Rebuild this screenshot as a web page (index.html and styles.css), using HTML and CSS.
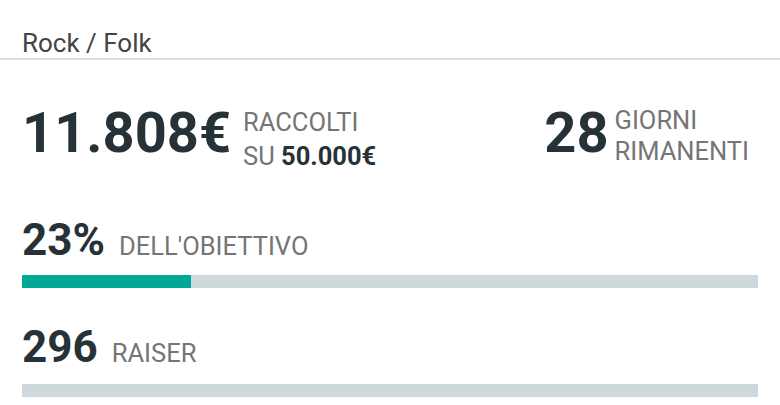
FILE: index.html
```html
<!DOCTYPE html>
<html>
<head>
<meta charset="utf-8">
<link rel="stylesheet" href="styles.css">
</head>
<body>
<div class="page">
  <div class="category">Rock / Folk</div>
  <div class="stats">
    <div class="stat">
      <span class="big">11.808€</span>
      <span class="label">RACCOLTI<br>SU <b>50.000€</b></span>
    </div>
    <div class="stat days">
      <span class="big">28</span>
      <span class="label">GIORNI<br>RIMANENTI</span>
    </div>
  </div>
  <div class="metric first">
    <div class="metric-head"><span class="mid">23%</span><span class="mlabel">DELL'OBIETTIVO</span></div>
    <div class="bar"><div class="fill" style="width:23%"></div></div>
  </div>
  <div class="metric second">
    <div class="metric-head"><span class="mid">296</span><span class="mlabel">RAISER</span></div>
    <div class="bar"></div>
  </div>
</div>
</body>
</html>
```
FILE: styles.css
```css
html, body {
  margin: 0;
  padding: 0;
  background: #fff;
}
body {
  font-family: Roboto, "Noto Sans", sans-serif;
  width: 780px;
  height: 405px;
  overflow: hidden;
}
.page {
  display: flex;
  flex-direction: column;
}
.category {
  font-size: 26px;
  color: #444;
  line-height: 30px;
  height: 30px;
  padding: 28px 22px 0 22px;
  border-bottom: 2px solid #dcdcdc;
}
.stats {
  display: flex;
  justify-content: space-between;
  padding: 45px 31px 0 22px;
  height: 68px;
}
.stat {
  display: flex;
  align-items: flex-start;
  gap: 12px;
}
.days {
  gap: 6px;
}
.big {
  font-size: 56px;
  font-weight: 700;
  color: #263238;
  line-height: 56px;
}
.label {
  font-size: 25.5px;
  line-height: 34px;
  color: #757575;
}
.days .label {
  line-height: 31px;
}
.label b {
  color: #263238;
  font-weight: 700;
}
.metric {
  padding: 0 22px;
  display: flex;
  flex-direction: column;
}
.first {
  margin-top: 45px;
}
.second {
  margin-top: 37px;
}
.metric-head {
  display: flex;
  align-items: baseline;
  gap: 14px;
  line-height: 44px;
  height: 44px;
}
.mid {
  font-size: 44px;
  font-weight: 700;
  color: #263238;
}
.mlabel {
  font-size: 25.5px;
  color: #757575;
}
.first .bar {
  margin-top: 13px;
}
.second .bar {
  margin-top: 15px;
}
.bar {
  height: 13px;
  background: #cfd8dc;
  width: 736px;
}
.fill {
  height: 100%;
  background: #00a896;
}
```
